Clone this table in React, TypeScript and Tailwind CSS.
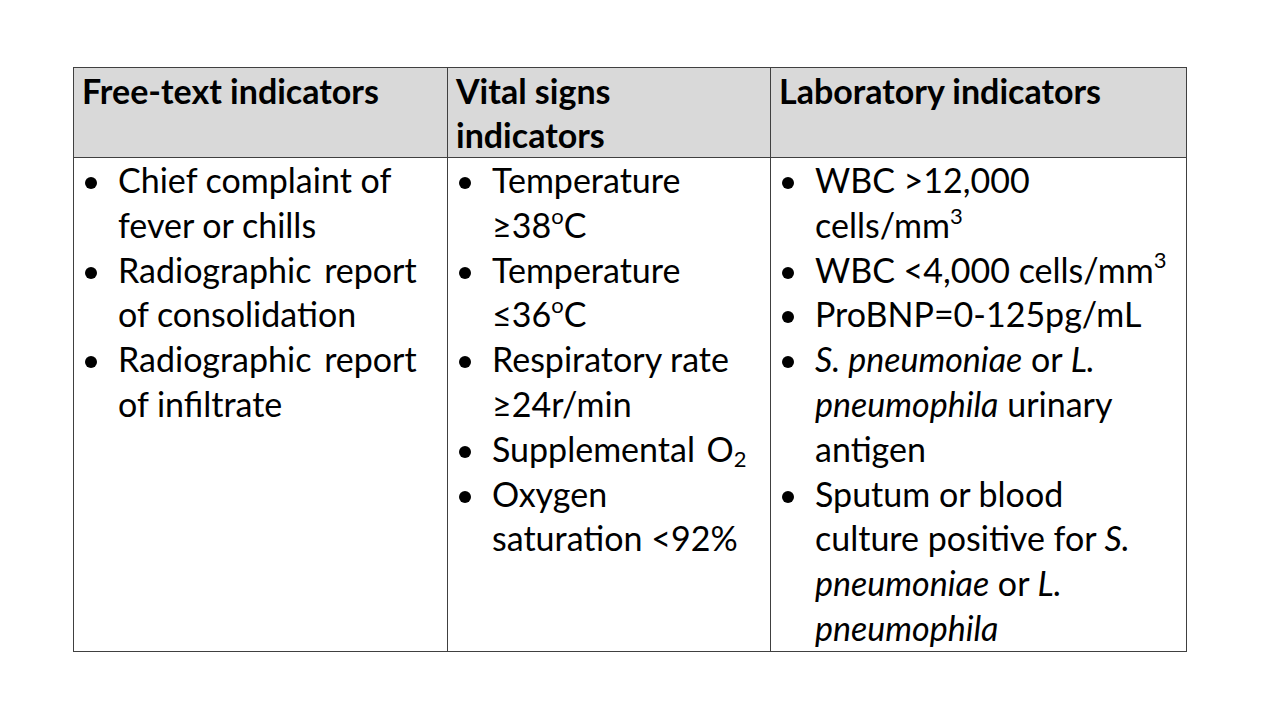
import type { ReactNode } from 'react'

// one bulleted entry; lines are broken where the source slide breaks them
function Item({ lines }: { lines: ReactNode[] }) {
  return (
    <div className="flex">
      <div className="w-[44px] shrink-0">
        <div className="ml-[11px] mt-[19px] h-[12px] w-[12px] rounded-full bg-black" />
      </div>
      <div>
        {lines.map((line, i) => (
          <div key={i} className="whitespace-nowrap">{line}</div>
        ))}
      </div>
    </div>
  )
}

const Sup = ({ children }: { children: ReactNode }) => (
  <sup className="text-[22px] top-[-0.65em]">{children}</sup>
)

export default function App() {
  return (
    <div className="w-[1280px] h-[720px] bg-white pt-[67px] pl-[73px] font-['Lato','Liberation_Sans',sans-serif] text-[34px] leading-[44.8px] text-black">
      <table className="border-collapse table-fixed">
        <colgroup>
          <col className="w-[374px]" />
          <col className="w-[323px]" />
          <col className="w-[416px]" />
        </colgroup>
        <thead>
          <tr className="bg-[#d9d9d9] leading-[44px]">
            <th className="h-[88px] border border-[#404040] pl-[8px] pt-[1px] text-left align-top font-bold">Free-text indicators</th>
            <th className="border border-[#404040] pl-[8px] pt-[1px] text-left align-top font-bold">
              Vital signs
              <br />
              indicators
            </th>
            <th className="border border-[#404040] pl-[8px] pt-[1px] text-left align-top font-bold">Laboratory indicators</th>
          </tr>
        </thead>
        <tbody>
          <tr>
            <td className="border border-[#404040] align-top">
              <Item lines={['Chief complaint of', 'fever or chills']} />
              <Item lines={[<span className="[word-spacing:4px]">Radiographic report</span>, 'of consolidation']} />
              <Item lines={[<span className="[word-spacing:4px]">Radiographic report</span>, 'of infiltrate']} />
            </td>
            <td className="border border-[#404040] align-top">
              <Item lines={['Temperature', <>≥38<Sup>o</Sup>C</>]} />
              <Item lines={['Temperature', <>≤36<Sup>o</Sup>C</>]} />
              <Item lines={['Respiratory rate', '≥24r/min']} />
              <Item lines={[<span className="[word-spacing:3px]">Supplemental O<sub className="text-[22px]">2</sub></span>]} />
              <Item lines={['Oxygen', 'saturation <92%']} />
            </td>
            <td className="border border-[#404040] align-top">
              <Item lines={['WBC >12,000', <>cells/mm<Sup>3</Sup></>]} />
              <Item lines={[<>WBC &lt;4,000 cells/mm<Sup>3</Sup></>]} />
              <Item lines={['ProBNP=0-125pg/mL']} />
              <Item
                lines={[
                  <><i>S. pneumoniae</i> or <i>L.</i></>,
                  <><i>pneumophila</i> urinary</>,
                  'antigen',
                ]}
              />
              <Item
                lines={[
                  'Sputum or blood',
                  <>culture positive for <i>S.</i></>,
                  <><i>pneumoniae</i> or <i>L.</i></>,
                  <i>pneumophila</i>,
                ]}
              />
            </td>
          </tr>
        </tbody>
      </table>
    </div>
  )
}
